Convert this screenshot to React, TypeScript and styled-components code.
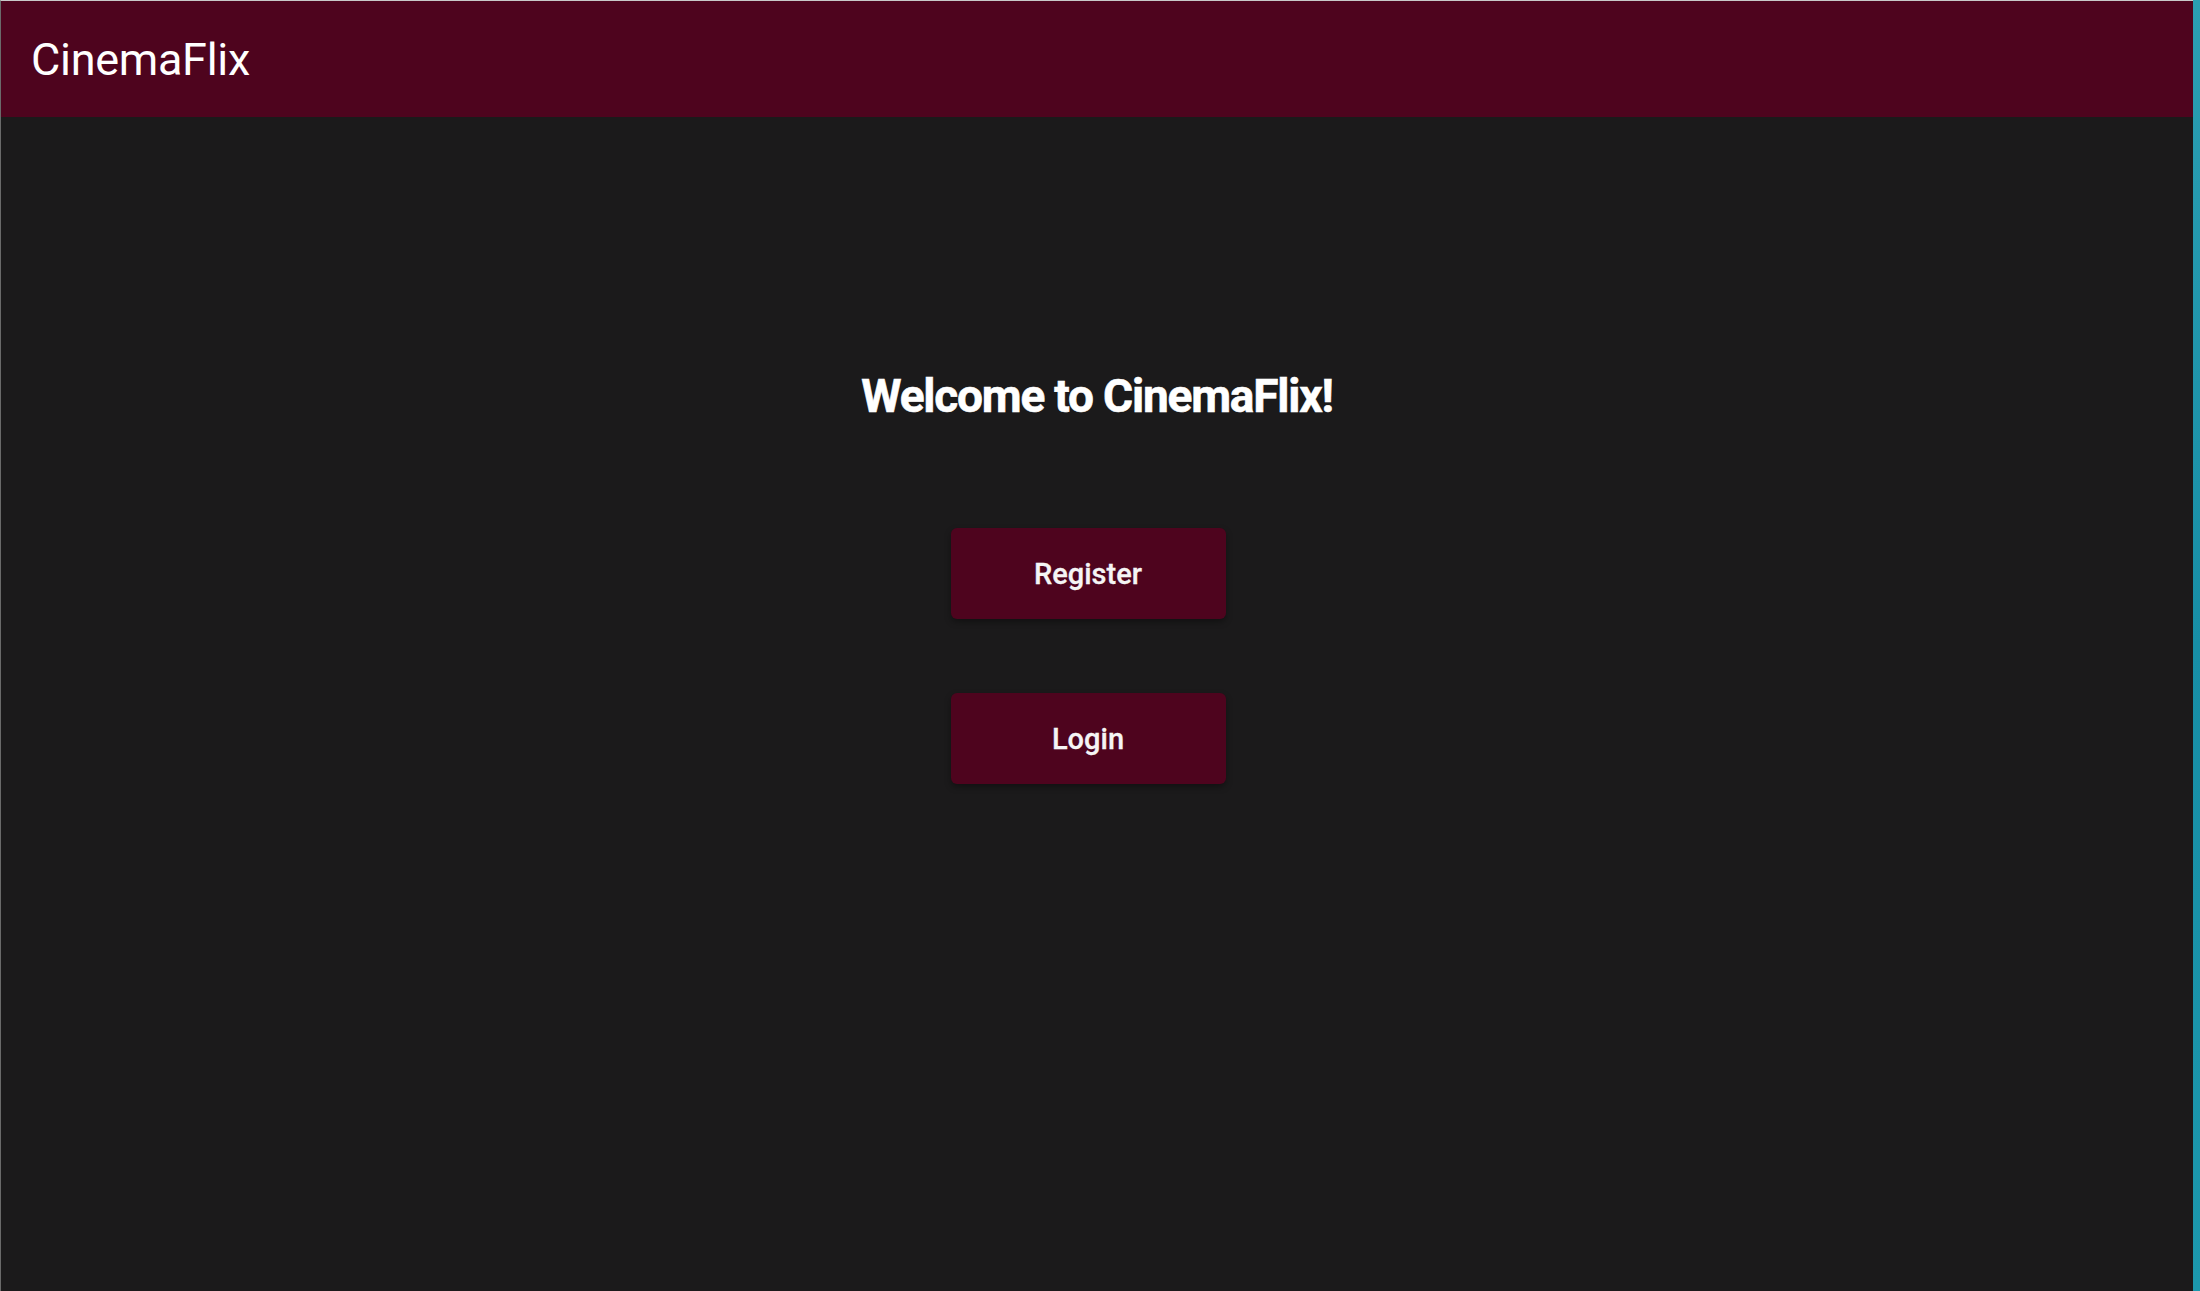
import { createGlobalStyle, styled } from "styled-components";

const GlobalStyle = createGlobalStyle`
  html, body {
    margin: 0;
    padding: 0;
    height: 100%;
    background: linear-gradient(180deg, #2b9fb3 0%, #178ea6 50%, #1c98ad 100%);
  }
  #root {
    height: 100%;
  }
  * {
    box-sizing: border-box;
  }
`;

export default function App() {
  return (
    <>
      <GlobalStyle />
      <Window>
        <Header>
          <Brand>CinemaFlix</Brand>
        </Header>
        <Main>
          <Title>Welcome to CinemaFlix!</Title>
          <Actions>
            <ActionButton type="button">Register</ActionButton>
            <ActionButton type="button">Login</ActionButton>
          </Actions>
        </Main>
      </Window>
    </>
  );
}

const Window = styled.div`
  width: 2193px;
  height: 100%;
  display: flex;
  flex-direction: column;
  background-color: #1b1a1b;
  border-top: 1px solid #c9c9c9;
  border-left: 1px solid #6a6a6a;
  font-family: Roboto, "Liberation Sans", sans-serif;
`;

const Header = styled.header`
  height: 116px;
  flex-shrink: 0;
  display: flex;
  align-items: center;
  padding: 0 30px;
  background-color: #4e041e;
`;

const Brand = styled.h2`
  margin: 0;
  color: #ffffff;
  font-size: 45px;
  font-weight: 400;
  letter-spacing: -0.3px;
`;

const Main = styled.main`
  flex: 1;
  display: flex;
  flex-direction: column;
  align-items: center;
  padding-top: 251px;
`;

const Title = styled.h1`
  margin: 0;
  color: #ffffff;
  font-size: 46px;
  font-weight: 700;
  line-height: 56px;
  letter-spacing: -1.2px;
  -webkit-text-stroke: 0.6px #ffffff;
`;

const Actions = styled.div`
  display: flex;
  flex-direction: column;
  align-items: center;
  gap: 74px;
  margin-top: 104px;
  margin-left: -18px;
`;

const ActionButton = styled.button`
  width: 275px;
  height: 91px;
  border: none;
  border-radius: 6px;
  background-color: #4e041e;
  color: #f5f5f5;
  font-family: Roboto, "Liberation Sans", sans-serif;
  font-size: 29px;
  font-weight: 500;
  -webkit-text-stroke: 0.3px #f5f5f5;
  box-shadow: 0 3px 6px rgba(0, 0, 0, 0.35);
  cursor: pointer;
`;
